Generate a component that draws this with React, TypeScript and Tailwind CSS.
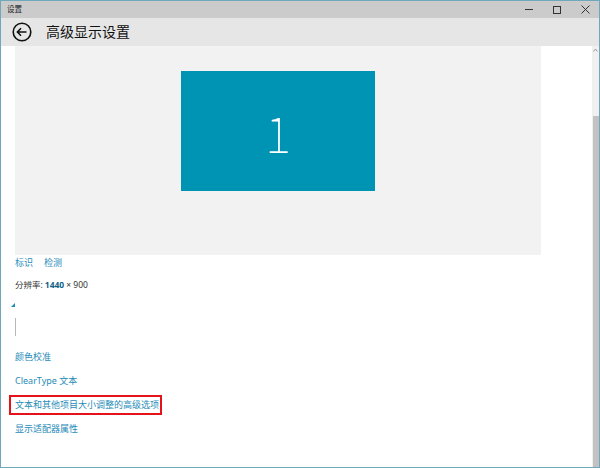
import React from "react";

const cjk = "font-['Noto_Sans','Noto_Sans_CJK_SC',sans-serif]";

export default function App() {
  return (
    <div className={`w-[600px] h-[468px] border border-[#6ea8ba] bg-white flex flex-col overflow-hidden ${cjk}`}>
      {/* title bar */}
      <div className="h-[17px] bg-[#cbcbcb] flex items-center shrink-0">
        <span className="pl-[6px] text-[7.5px] text-[#222] leading-none">设置</span>
        <div className="ml-auto flex items-center h-full">
          <div className="w-[28px] flex justify-center">
            <div className="w-[8px] h-px bg-[#333]" />
          </div>
          <div className="w-[28px] flex justify-center">
            <div className="w-[8px] h-[8px] border border-[#333]" />
          </div>
          <div className="w-[28px] flex justify-center">
            <svg width="9" height="9" viewBox="0 0 9 9">
              <path d="M0.5 0.5L8.5 8.5M8.5 0.5L0.5 8.5" stroke="#333" strokeWidth="1" />
            </svg>
          </div>
        </div>
      </div>
      {/* header */}
      <div className="h-[28px] bg-[#e6e6e6] flex items-center shrink-0">
        <div className="w-[45px] flex pl-[11px]">
          <svg width="20" height="20" viewBox="0 0 20 20">
            <circle cx="10" cy="10" r="8.8" fill="none" stroke="#111" strokeWidth="1.6" />
            <path d="M5.5 10H14.5M9 6.3L5.4 10L9 13.7" fill="none" stroke="#111" strokeWidth="1.6" />
          </svg>
        </div>
        <span className="text-[14px] text-[#111] leading-none">高级显示设置</span>
      </div>
      {/* body */}
      <div className="flex-1 flex min-h-0">
        <div className="flex-1 pl-[14px] flex flex-col">
          <div className="w-[526px] h-[209px] bg-[#f2f2f2] flex justify-center pt-[25px] shrink-0">
            <div className="w-[194px] h-[120px] bg-[#0094b4] flex items-center justify-center">
              <span className="text-white text-[50px] font-thin leading-none font-['Noto_Sans_CJK_SC',sans-serif]">1</span>
            </div>
          </div>
          <div className="h-[16px] flex items-center gap-[11px] text-[9px] text-[#1f8bb8]">
            <span>标识</span>
            <span>检测</span>
          </div>
          <div className="h-[28px] flex items-center text-[8.5px] text-[#333]">
            <span>分辨率: </span>
            <span className="text-[#0f5f88] font-bold ml-[2px]">1440</span>
            <span className="ml-[2px]">× 900</span>
          </div>
          <div className="h-[12px] flex items-center -ml-[4px]">
            <svg width="4" height="4" viewBox="0 0 4 4">
              <path d="M0 4L4 0V4Z" fill="#1f8bb8" />
            </svg>
          </div>
          <div className="h-[34px] pt-[7px]">
            <div className="w-px h-[18px] bg-[#b8b4c0]" />
          </div>
          <div className="h-[24px] flex items-center text-[9px] text-[#1f8bb8]">颜色校准</div>
          <div className="h-[24px] flex items-center text-[9px] text-[#1f8bb8]">ClearType 文本</div>
          <div className="h-[24px] flex items-center">
            <div className="-ml-[6px] w-[153px] h-[20px] border-2 border-[#e5121c] pl-[4px] flex items-center text-[9px] text-[#1f8bb8]">
              文本和其他项目大小调整的高级选项
            </div>
          </div>
          <div className="h-[24px] flex items-center text-[9px] text-[#1f8bb8]">显示适配器属性</div>
        </div>
        {/* scrollbar */}
        <div className="w-[7px] bg-[#f0f0f0] flex flex-col items-center shrink-0">
          <div className="h-[70px] w-full flex justify-center pt-[2px]">
            <svg width="5" height="4" viewBox="0 0 5 4">
              <path d="M0.5 3.5L2.5 1L4.5 3.5" fill="none" stroke="#999" strokeWidth="1" />
            </svg>
          </div>
          <div className="flex-1 w-[6px] bg-[#c2c2c2]" />
        </div>
      </div>
    </div>
  );
}
